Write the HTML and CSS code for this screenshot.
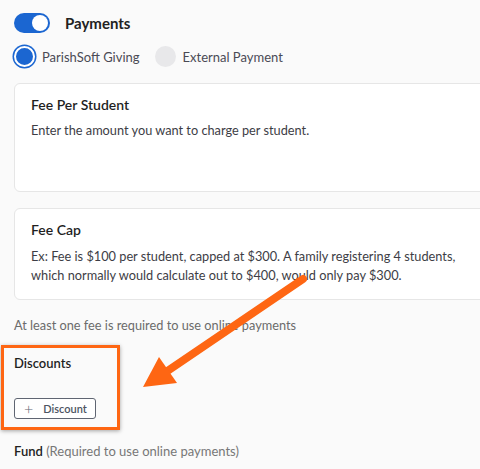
FILE: index.html
```html
<!DOCTYPE html>
<html lang="en">
<head>
  <meta charset="UTF-8">
  <meta name="viewport" content="width=device-width, initial-scale=1.0">
  <title>Payments</title>
  <link rel="stylesheet" href="styles.css">
</head>

<body>
  <div class="page">
    <div class="switch-row">
      <span class="switch"><span class="knob"></span></span>
      <span class="switch-label">Payments</span>
    </div>

    <div class="radios">
      <label class="radio"><span class="dot checked"></span>ParishSoft Giving</label>
      <label class="radio"><span class="dot"></span>External Payment</label>
    </div>

    <div class="card card-tall">
      <div class="card-title">Fee Per Student</div>
      <p class="card-text">Enter the amount you want to charge per student.</p>
    </div>

    <div class="card">
      <div class="card-title">Fee Cap</div>
      <p class="card-text">Ex: Fee is $100 per student, capped at $300. A family registering 4 students, which normally would calculate out to $400, would only pay $300.</p>
    </div>

    <p class="note">At least one fee is required to use online payments</p>

    <div class="discounts">
      <div class="section-title">Discounts</div>
      <button class="add-btn"><span class="plus">+</span>Discount</button>
    </div>

    <div class="fund"><strong>Fund</strong> <span class="hint">(Required to use online payments)</span></div>
  </div>

  <!-- annotation overlay -->
  <div class="highlight"></div>
  <svg class="arrow" width="480" height="469" viewBox="0 0 480 469">
    <line x1="303" y1="279" x2="163" y2="374" stroke="#fe6613" stroke-width="8" stroke-linecap="round"/>
    <polygon points="143,387 159,357 177,383" fill="#fe6613"/>
  </svg>
</body>
</html>
```

FILE: styles.css
```css
body {
  margin: 0;
  background-color: #fafafa;
  font-family: Lato, "Open Sans", sans-serif;
  color: #2b2b2b;
  overflow: hidden;
  height: 469px;
  position: relative;
}

.page {
  padding: 13px 0 0 14px;
}

.switch-row {
  display: flex;
  align-items: center;
  height: 20px;
}

.switch {
  width: 36px;
  height: 20px;
  border-radius: 10px;
  background-color: #1b66d1;
  position: relative;
  flex-shrink: 0;
}

.knob {
  position: absolute;
  right: 2px;
  top: 2px;
  width: 16px;
  height: 16px;
  border-radius: 50%;
  background-color: #fff;
}

.switch-label {
  margin-left: 15px;
  font-size: 15px;
  font-weight: 700;
  color: #222;
}

.radios {
  display: flex;
  align-items: center;
  margin-top: 13px;
  height: 21px;
}

.radio {
  display: flex;
  align-items: center;
  font-size: 13px;
  color: #4a4a55;
  margin-right: 15px;
}

.dot {
  width: 21px;
  height: 21px;
  border-radius: 50%;
  background-color: #e8e8ea;
  margin-right: 7px;
  box-sizing: border-box;
}

.dot.checked {
  background-color: #1b66d1;
  border: 2px solid #fff;
  box-shadow: 0 0 0 1.5px #1b66d1;
}

.card {
  background-color: #fff;
  border: 1px solid #e6e6e6;
  border-radius: 6px;
  margin-right: -30px;
  padding: 12px 16px 14px;
  margin-top: 16px;
}

.card-tall {
  height: 81px;
}

.card-title {
  font-size: 14px;
  font-weight: 600;
  color: #1f1f1f;
  line-height: 18px;
}

.card-text {
  margin: 8px 0 0;
  font-size: 12.75px;
  line-height: 19px;
  color: #3d3d45;
  max-width: 440px;
}

.card-tall .card-text {
  margin-top: 7px;
}

.note {
  margin: 16px 0 0;
  font-size: 12.75px;
  color: #6b6b6b;
  line-height: 18px;
}

.discounts {
  margin-top: 20px;
}

.section-title {
  font-size: 13px;
  font-weight: 600;
  color: #1f1f1f;
  line-height: 18px;
}

.add-btn {
  margin-top: 26px;
  display: flex;
  align-items: center;
  height: 21px;
  width: 82px;
  padding: 0 0 0 9px;
  border: 1px solid #5f6572;
  border-radius: 3px;
  background-color: #fff;
  font-family: inherit;
  font-size: 11px;
  font-weight: 600;
  color: #4d5563;
}

.plus {
  font-size: 16px;
  font-weight: 300;
  margin-right: 10px;
  color: #5f6572;
}

.fund {
  margin-top: 24px;
  font-size: 13px;
  color: #222;
}

.fund strong {
  font-weight: 600;
}

.hint {
  color: #777;
}

.highlight {
  position: absolute;
  left: 1px;
  top: 345px;
  width: 119px;
  height: 85px;
  box-sizing: border-box;
  border: 3px solid #fe6613;
  box-shadow: 0 1px 4px rgba(0, 0, 0, 0.35);
}

.arrow {
  position: absolute;
  left: 0;
  top: 0;
}
```
